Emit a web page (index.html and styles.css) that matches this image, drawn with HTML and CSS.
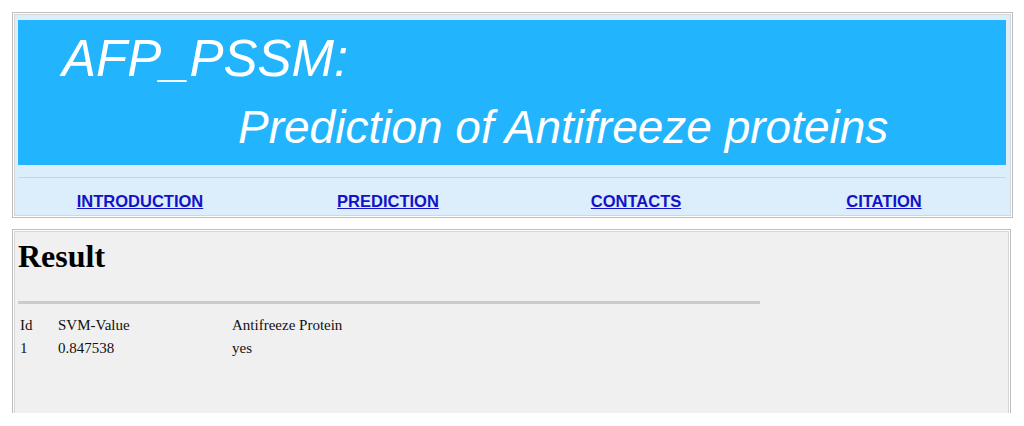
FILE: index.html
```html
<!DOCTYPE html>
<html>
<head>
<meta charset="utf-8">
<title>AFP_PSSM</title>
<link rel="stylesheet" href="styles.css">
</head>
<body>
<div class="frame header">
  <div class="frame-inner header-inner">
    <div class="banner">
      <div class="title1">AFP_PSSM:</div>
      <div class="title2">Prediction of Antifreeze proteins</div>
    </div>
    <div class="rule"></div>
    <nav class="nav">
      <a class="nav-link" href="#">INTRODUCTION</a>
      <a class="nav-link" href="#">PREDICTION</a>
      <a class="nav-link" href="#">CONTACTS</a>
      <a class="nav-link" href="#">CITATION</a>
    </nav>
  </div>
</div>
<div class="frame content">
  <div class="frame-inner content-inner">
    <h1 class="result-title">Result</h1>
    <div class="hr"></div>
    <table class="result-table">
      <tr><td class="c-id">Id</td><td class="c-val">SVM-Value</td><td>Antifreeze Protein</td></tr>
      <tr><td class="c-id">1</td><td class="c-val">0.847538</td><td>yes</td></tr>
    </table>
  </div>
</div>
</body>
</html>
```
FILE: styles.css
```css
html, body {
  margin: 0;
  padding: 0;
  background: #ffffff;
}
body {
  padding: 12px 0 0 12px;
  font-family: "Liberation Serif", "Times New Roman", serif;
}
.frame {
  border: 1px solid #bdbdbd;
  padding: 1px;
  background: #ffffff;
  box-sizing: border-box;
}
.frame-inner {
  border: 1px solid #d6d6d6;
}
.header {
  width: 1001px;
}
.header-inner {
  background: #dcedfc;
  padding: 5px 4px 0 3px;
}
.banner {
  background: #22b5fd;
  color: #ffffff;
  font-family: "Liberation Sans", Arial, sans-serif;
  font-style: italic;
  padding: 10px 0 10px 0;
}
.title1 {
  font-size: 51px;
  line-height: 58px;
  margin-left: 44px;
}
.title2 {
  font-size: 46px;
  line-height: 56px;
  margin-top: 11px;
  margin-left: 220px;
}
.rule {
  margin-top: 12px;
  height: 1px;
  background: #c6d6e6;
}
.nav {
  display: grid;
  grid-template-columns: repeat(4, 248px);
  margin-left: -2px;
  padding: 13px 0 4px 0;
}
.nav-link {
  font-family: "Liberation Sans", Arial, sans-serif;
  font-weight: bold;
  font-size: 16.5px;
  line-height: 20px;
  color: #1212c8;
  text-align: center;
  justify-self: center;
  text-decoration: underline;
}
.content {
  width: 999px;
  margin-top: 11px;
  height: 184px;
  border-bottom: none;
  padding-bottom: 0;
}
.content-inner {
  background: #f0f0f0;
  height: 100%;
  box-sizing: border-box;
  border-bottom: none;
  padding: 6px 3px 0 3px;
}
.result-title {
  margin: 0;
  font-size: 32px;
  line-height: 37px;
  font-weight: bold;
  color: #000000;
}
.hr {
  width: 742px;
  height: 3px;
  background: #cbcbcb;
  margin-top: 26px;
}
.result-table {
  margin-top: 10px;
  border-collapse: collapse;
  font-size: 15px;
  color: #111111;
}
.result-table td {
  padding: 0 0 0 2px;
  height: 23px;
  line-height: 23px;
  vertical-align: top;
}
.c-id {
  width: 36px;
}
.c-val {
  width: 172px;
}
```
